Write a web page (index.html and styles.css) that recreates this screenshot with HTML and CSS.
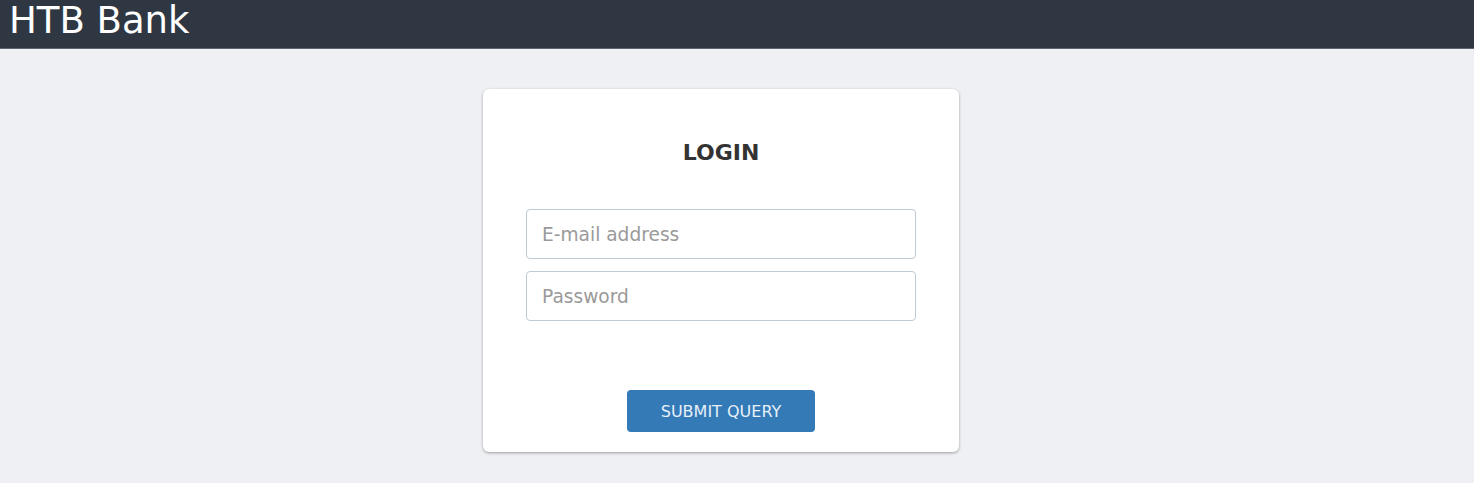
FILE: index.html
```html
<!DOCTYPE html>
<html lang="en">
<head>
<meta charset="utf-8">
<title>HTB Bank</title>
<link rel="stylesheet" href="styles.css">
</head>
<body>
<header class="topbar">
  <h1 class="brand">HTB Bank</h1>
</header>
<main class="page">
  <form class="card" onsubmit="return false;">
    <h2 class="card-title">LOGIN</h2>
    <div class="fields">
      <input class="field" type="email" placeholder="E-mail address">
      <input class="field" type="password" placeholder="Password">
    </div>
    <div class="actions">
      <button class="btn" type="submit">Submit Query</button>
    </div>
  </form>
</main>
</body>
</html>
```

FILE: styles.css
```css
* { box-sizing: border-box; }
html, body {
  margin: 0;
  padding: 0;
  height: 100%;
}
body {
  font-family: "DejaVu Sans", sans-serif;
  background: #eff0f4;
  color: #333;
}
.topbar {
  height: 49px;
  background: #2e3742;
  border-bottom: 1px solid #5d6571;
  padding: 0 0 0 9px;
}
.brand {
  margin: 0;
  font-weight: normal;
  font-size: 37px;
  line-height: 42px;
  color: #ffffff;
}
.page {
  display: flex;
  justify-content: center;
  padding: 40px 32px 0 0;
}
.card {
  width: 476px;
  background: #ffffff;
  border-radius: 6px;
  box-shadow: 0 1px 3px rgba(0, 0, 0, 0.35);
  padding: 44px 43px 20px;
  display: flex;
  flex-direction: column;
}
.card-title {
  margin: 0 0 36px;
  text-align: center;
  font-size: 22px;
  line-height: 40px;
  font-weight: bold;
  color: #333333;
}
.fields {
  display: flex;
  flex-direction: column;
  gap: 12px;
}
.field {
  height: 50px;
  width: 100%;
  border: 1px solid #bfcad6;
  border-radius: 4px;
  padding: 0 15px;
  font-family: "DejaVu Sans", sans-serif;
  font-size: 18.6px;
  color: #333;
  background: #fff;
  outline: none;
}
.field::placeholder {
  color: #9a9a9a;
}
.actions {
  display: flex;
  justify-content: center;
  margin-top: 69px;
}
.btn {
  width: 188px;
  height: 42px;
  border: none;
  border-radius: 4px;
  background: #337ab7;
  color: #e8f0f8;
  font-family: "DejaVu Sans", sans-serif;
  font-size: 16px;
  text-transform: uppercase;
  cursor: pointer;
}
```
